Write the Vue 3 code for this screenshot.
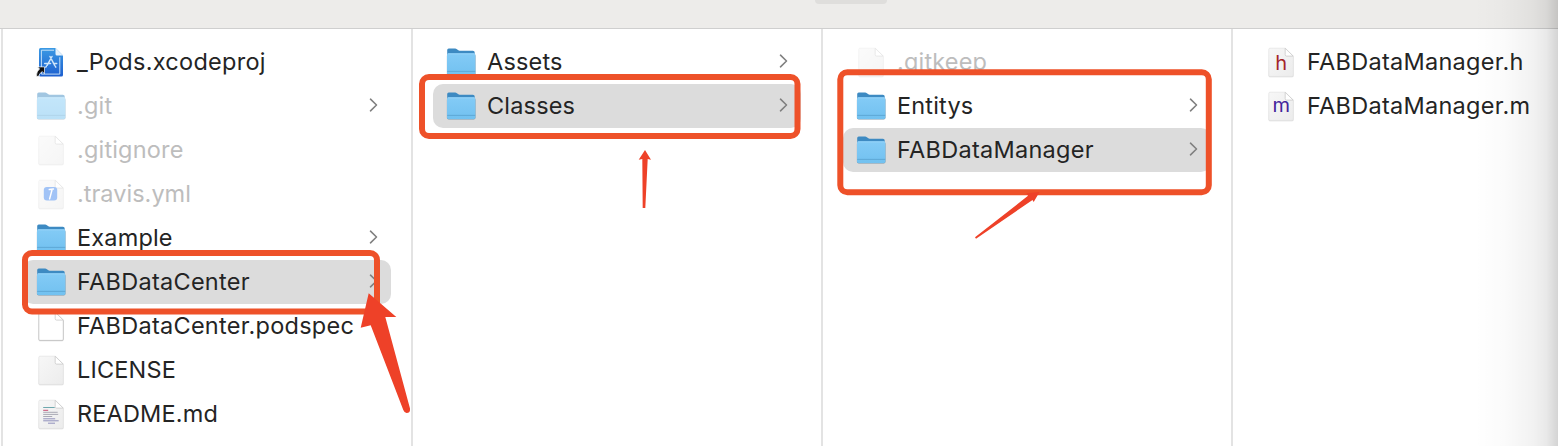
<script setup>
const columns = [
  [
    { name: '_Pods.xcodeproj', icon: 'xcode', fit: 'wide' },
    { name: '.git', icon: 'folder', dim: true, more: true, fit: 'mid' },
    { name: '.gitignore', icon: 'blank', dim: true, fit: 'mid' },
    { name: '.travis.yml', icon: 'yml', dim: true, fit: 'tight' },
    { name: 'Example', icon: 'folder', more: true, fit: 'mid' },
    { name: 'FABDataCenter', icon: 'folder', more: true, selected: true, fit: 'wide' },
    { name: 'FABDataCenter.podspec', icon: 'outline', fit: 'wide' },
    { name: 'LICENSE', icon: 'blank', fit: 'mid' },
    { name: 'README.md', icon: 'doc', fit: 'mid' },
  ],
  [
    { name: 'Assets', icon: 'folder', more: true, fit: 'mid' },
    { name: 'Classes', icon: 'folder', more: true, selected: true, fit: 'mid' },
  ],
  [
    { name: '.gitkeep', icon: 'blank', dim: true, fit: 'mid' },
    { name: 'Entitys', icon: 'folder', more: true, fit: 'mid' },
    { name: 'FABDataManager', icon: 'folder', more: true, selected: true, fit: 'wide' },
  ],
  [
    { name: 'FABDataManager.h', icon: 'h', fit: 'wide' },
    { name: 'FABDataManager.m', icon: 'm', fit: 'wide' },
  ],
]
</script>

<template>
  <div class="window">
    <svg class="defs" width="0" height="0">
      <defs>
        <linearGradient id="folderFront" x1="0" y1="0" x2="0" y2="1">
          <stop offset="0" stop-color="#83cbf6" />
          <stop offset="1" stop-color="#72c1f0" />
        </linearGradient>
        <linearGradient id="paper" x1="0" y1="0" x2="1" y2="1">
          <stop offset="0" stop-color="#f7f7f7" />
          <stop offset="1" stop-color="#ececec" />
        </linearGradient>
        <linearGradient id="project" x1="0" y1="0" x2="0" y2="1">
          <stop offset="0" stop-color="#3b9ae4" />
          <stop offset="1" stop-color="#1d5fcf" />
        </linearGradient>
      </defs>
    </svg>
    <header class="toolbar"><div class="pill"></div></header>
    <main class="columns">
      <section v-for="(items, c) in columns" :key="c" class="column">
        <div
          v-for="item in items"
          :key="item.name"
          class="row"
          :class="{ selected: item.selected, dim: item.dim }"
        >
          <svg class="icon" viewBox="0 0 34 34">
            <g v-if="item.icon === 'folder'">
              <path d="M3.200 28.500V5q0-1.500 1.500-1.500h6.400q1 0 1.800.7l1.100.9q.7.6 1.700.6h13.200q1.800 0 1.800 1.800v20.900z" fill="#3d8ac2" />
              <rect x="2.900" y="9" width="28.600" height="21.600" rx="1.800" fill="#7396ad" />
              <rect x="3" y="8.300" width="28.300" height="21.600" rx="1.500" fill="url(#folderFront)" />
              <path d="M3.200 26.400h28" stroke="#5ba5d2" stroke-width=".9" />
              <path d="M3.800 8.900h26.800" stroke="#9dd8fa" stroke-width=".8" />
            </g>
            <g v-else-if="item.icon === 'xcode'">
              <path d="M5 4.500Q5 3 6.500 3H21.500l7.500 7.500v19.500q0 1.500-1.500 1.500h-21Q5 31.500 5 30z" fill="url(#project)" />
              <path d="M21.500 3 29 10.500h-6q-1.500 0-1.500-1.500z" fill="#e6f2fb" />
              <path d="M20 5.200H7.400v23.900h18.400V12.200" fill="none" stroke="#d5eafa" stroke-width=".9" />
              <g fill="none" stroke="#cfe6fa" stroke-width="1.500" stroke-linecap="round">
                <path d="M16 11.500l4.700 8.800M18 11.500l-4.900 8.800M10.700 18.500h5.800M19.500 18.500h3.200M21.300 21.300l.5.8M12.300 21.300l-.5.800" />
              </g>
              <path d="M2.300 31.300q.2-5.300 3.300-7.400l-2-2h6.900v6.900l-2.200-2.200q-3 1.700-3.600 4.700z" fill="#111" stroke="#fff" stroke-width=".7" />
            </g>
            <g v-else>
              <path d="M5 4.300h16.500l8 8v18.600q0 1.300-1.300 1.300H5.900q-1.300 0-1.300-1.300z" fill="#c9c9c9" opacity=".7" />
              <path
                d="M4.800 4.400q0-1.200 1.200-1.200h15.400l7.900 7.900v19.100q0 1.200-1.200 1.200H6q-1.200 0-1.200-1.200z"
                :fill="item.icon === 'outline' ? '#fff' : 'url(#paper)'"
                :stroke="item.icon === 'outline' ? '#b5b5b5' : '#e2e2e2'"
                stroke-width=".7"
              />
              <path d="M21.200 3.300v6.400q0 1.400 1.400 1.400h6.600z" fill="#fff" stroke="#c4c4c4" stroke-width=".7" />
              <g v-if="item.icon === 'yml'">
                <rect x="9.800" y="10" width="13.400" height="13.600" rx="3" fill="#3d83ee" />
                <path d="M15.300 12.600l4.100-.6M18.100 12.600l-2.500 9.300" stroke="#fff" stroke-width="1.500" fill="none" stroke-linecap="round" />
              </g>
              <g v-if="item.icon === 'doc'" fill="none" stroke-width="1">
                <path d="M9.200 10.500h11.500" stroke="#6fa8ae" />
                <path d="M9.200 13.300h5" stroke="#c54b72" />
                <path d="M9.200 15.300h14.500M9.200 17.400h15M9.200 19.500h9" stroke="#a9a9b5" />
                <path d="M9.200 21.800h12M9.200 23.800h15.500M14 26.200h7" stroke="#9292bd" />
              </g>
              <text v-if="item.icon === 'h'" class="glyph red" x="17.200" y="24.800">h</text>
              <text v-if="item.icon === 'm'" class="glyph violet" x="17.200" y="23">m</text>
            </g>
          </svg>
          <span class="name" :class="item.fit">{{ item.name }}</span>
          <svg v-if="item.more" class="chevron" viewBox="0 0 10 16">
            <path d="M1.500 2.200 7.500 8l-6 5.800" />
          </svg>
        </div>
      </section>
    </main>
    <div class="edge"></div>
    <svg class="marks" viewBox="0 0 1558 446">
      <g class="boxes">
        <rect x="25" y="253" width="352" height="58.500" rx="7" />
        <rect x="422" y="77" width="375.500" height="59" rx="7" />
        <rect x="840.300" y="72.300" width="368.500" height="120" rx="7" />
      </g>
      <g class="arrows">
        <path d="M368.700 293.300 396.300 317 385.300 317 410 408.500Q410.500 413 406.500 413 404.500 413 403.300 410L370.700 325.300 360.700 327.700Z" />
        <path d="M645 150 651 159.700 647.700 159 645.300 208H642.700L642.300 159 638.700 159.700Z" />
        <path d="M1039.500 192 1026.500 193.300 1028 195.800 975 237.300 976 238.700 1032.500 200 1033.700 202Z" />
      </g>
    </svg>
  </div>
</template>

<style>
body {
  background: #fff;
}
</style>

<style scoped>
.window {
  position: relative;
  box-sizing: border-box;
  width: 1558px;
  height: 446px;
  overflow: hidden;
  display: flex;
  flex-direction: column;
  background: #fff;
  font-family: Inter, "Liberation Sans", sans-serif;
}
.defs {
  position: absolute;
}
.toolbar {
  box-sizing: border-box;
  height: 29px;
  flex: none;
  background: #edecea;
  border-bottom: 1px solid #cfcfcf;
}
.pill {
  width: 72px;
  height: 4px;
  margin-left: 815px;
  background: #dfdedc;
  border-radius: 0 0 7px 7px;
}
.columns {
  flex: 1;
  display: flex;
  padding-left: 1px;
}
.column {
  box-sizing: border-box;
  width: 410px;
  flex: none;
  padding: 11px 20px 0;
  border-left: 2px solid #e3e3e3;
}
.row {
  height: 44px;
  box-sizing: border-box;
  display: flex;
  align-items: center;
  padding: 0 12px 0 11px;
  border-radius: 10px;
}
.selected {
  background: #dcdcdc;
}
.icon {
  width: 34px;
  height: 34px;
  flex: none;
}
.dim .icon {
  opacity: 0.48;
}
.name {
  margin-left: 9px;
  flex: 1;
  color: #242424;
  font-size: 23.5px;
  line-height: 44px;
  white-space: nowrap;
}
.tight {
  letter-spacing: 0.02px;
}
.mid {
  letter-spacing: 0.17px;
}
.wide {
  letter-spacing: 0.28px;
}
.dim .name {
  color: #bdbdbd;
}
.chevron {
  width: 10px;
  height: 16px;
  flex: none;
  margin-top: -3px;
}
.chevron path {
  fill: none;
  stroke: #808080;
  stroke-width: 1.6;
  stroke-linecap: round;
  stroke-linejoin: round;
}
.glyph {
  font-size: 20px;
  text-anchor: middle;
}
.red {
  fill: #a3242b;
}
.violet {
  fill: #43259b;
}
.edge {
  position: absolute;
  top: 0;
  right: 0;
  width: 84px;
  height: 100%;
  background: linear-gradient(90deg, transparent, rgba(0, 0, 0, 0.015) 35%, rgba(0, 0, 0, 0.05) 70%, rgba(0, 0, 0, 0.085) 86%, rgba(0, 0, 0, 0.17));
}
.marks {
  position: absolute;
  inset: 0;
  width: 1558px;
  height: 446px;
}
.boxes {
  fill: none;
  stroke: #ee5129;
  stroke-width: 6;
}
.arrows {
  fill: #ee4128;
}
</style>
